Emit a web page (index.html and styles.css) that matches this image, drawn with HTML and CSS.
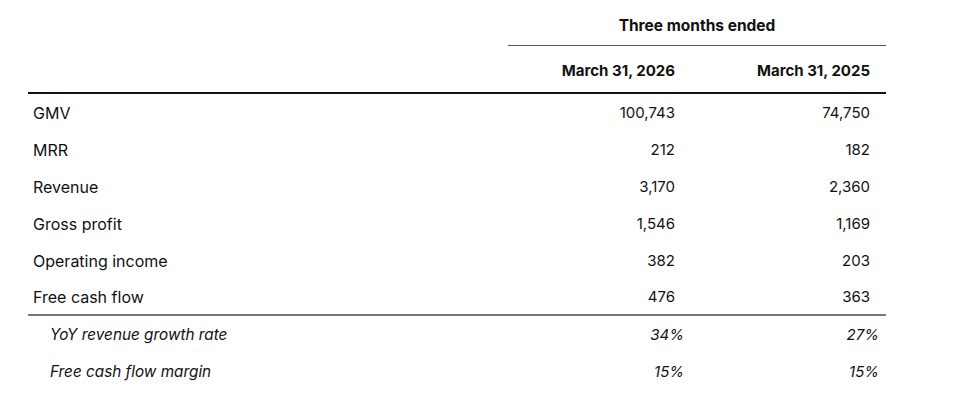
FILE: index.html
```html
<!DOCTYPE html>
<html>
<head>
<meta charset="utf-8">
<link rel="stylesheet" href="styles.css">
</head>
<body>
<table class="fin">
  <colgroup>
    <col class="c-label">
    <col class="c-a">
    <col class="c-b">
  </colgroup>
  <thead>
    <tr class="h1">
      <th class="blank"></th>
      <th class="period" colspan="2">Three months ended</th>
    </tr>
    <tr class="h2">
      <th class="blank"></th>
      <th class="date">March 31, 2026</th>
      <th class="date">March 31, 2025</th>
    </tr>
  </thead>
  <tbody>
    <tr><td class="lbl">GMV</td><td class="num">100,743</td><td class="num">74,750</td></tr>
    <tr><td class="lbl">MRR</td><td class="num">212</td><td class="num">182</td></tr>
    <tr><td class="lbl">Revenue</td><td class="num">3,170</td><td class="num">2,360</td></tr>
    <tr><td class="lbl">Gross profit</td><td class="num">1,546</td><td class="num">1,169</td></tr>
    <tr><td class="lbl">Operating income</td><td class="num">382</td><td class="num">203</td></tr>
    <tr class="last"><td class="lbl">Free cash flow</td><td class="num">476</td><td class="num">363</td></tr>
    <tr class="it"><td class="lbl">YoY revenue growth rate</td><td class="pct">34%</td><td class="pct">27%</td></tr>
    <tr class="it"><td class="lbl">Free cash flow margin</td><td class="pct">15%</td><td class="pct">15%</td></tr>
  </tbody>
</table>
</body>
</html>
```
FILE: styles.css
```css
html, body {
  margin: 0;
  padding: 0;
  background: #fff;
}
body {
  font-family: Inter, Roboto, "Liberation Sans", sans-serif;
  font-size: 15px;
  color: #111;
}
.fin {
  margin-left: 28px;
  width: 858px;
  border-collapse: separate;
  border-spacing: 0;
  table-layout: fixed;
}
.c-label { width: 480px; }
.c-a { width: 183px; }
.c-b { width: 195px; }
.fin th, .fin td {
  padding: 0;
  vertical-align: middle;
}
.h1 th {
  height: 46px;
  box-sizing: border-box;
}
.period {
  font-weight: 700;
  font-size: 15.5px;
  text-align: center;
  border-bottom: 1px solid #555;
  padding-top: 5px !important;
}
.h2 th {
  height: 48px;
  border-bottom: 2px solid #111;
  padding-top: 3px;
  box-sizing: border-box;
}
.date {
  font-weight: 700;
  text-align: right;
  padding-right: 16px !important;
}
tbody td {
  height: 37px;
}
.lbl {
  padding-left: 5px !important;
  text-align: left;
  font-size: 16px;
}
.num {
  text-align: right;
  padding-right: 16px !important;
}
.pct {
  text-align: right;
  padding-right: 7px !important;
}
.last td {
  border-bottom: 2px solid #777;
  height: 35px;
}
.it td {
  font-style: italic;
}
.it .lbl {
  padding-left: 22px !important;
  font-size: 15.3px;
}
```
